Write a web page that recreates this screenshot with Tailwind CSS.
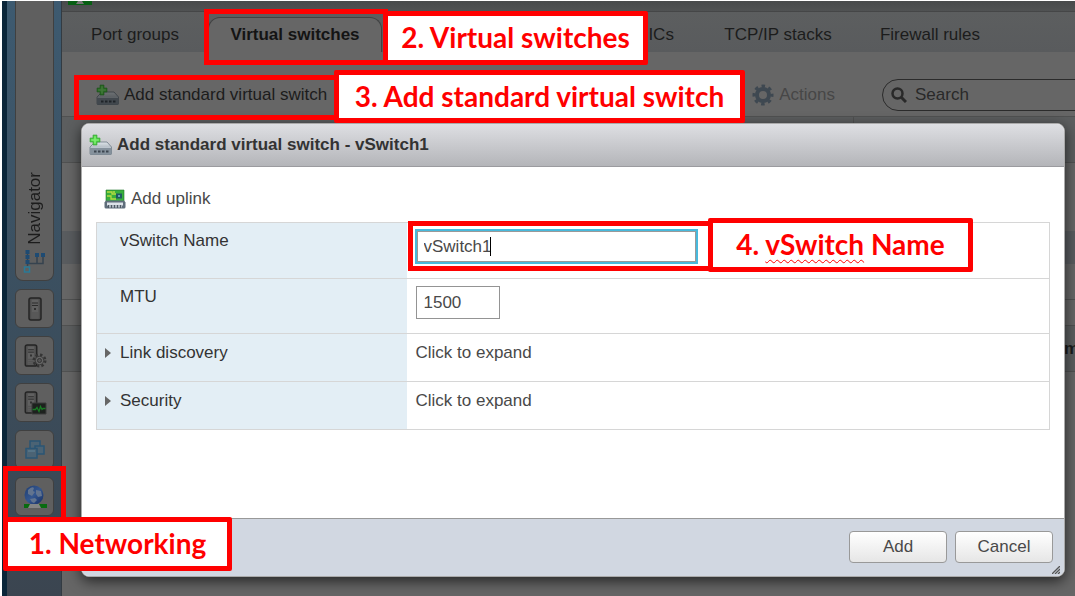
<!DOCTYPE html>
<html lang="en">
<head>
<meta charset="utf-8">
<title>Add standard virtual switch</title>
<script src="https://cdn.jsdelivr.net/npm/@tailwindcss/browser@4"></script>
</head>
<body class="bg-white">
<svg class="absolute h-0 w-0" aria-hidden="true">
  <defs>
    <linearGradient id="metal" x1="0" y1="0" x2="0" y2="1"><stop offset="0" stop-color="#dfe5ea"/><stop offset="1" stop-color="#76838f"/></linearGradient>
    <linearGradient id="globe" x1="0" y1="0" x2="1" y2="1"><stop offset="0" stop-color="#1f3d70"/><stop offset="0.5" stop-color="#34568f"/><stop offset="1" stop-color="#152e63"/></linearGradient>
    <symbol id="switch" viewBox="0 0 24 22">
      <path d="M6 8h12l4.500 5v6.500q0 1-1 1H2q-1 0-1-1V13z" fill="url(#metal)" stroke="#6d7a87" stroke-width=".8"/>
      <path d="M1 13h21.500v6.500q0 1-1 1H2q-1 0-1-1z" fill="#85919c"/>
      <path d="M1.500 13.400h20.500" stroke="#c3ccd4" stroke-width="1"/>
      <path d="M5 16.500h2.500v2H5zM9 16.500h2.500v2H9zM13 16.500h2.500v2H13zM17 16.500h2.500v2H17z" fill="#3d4650"/>
      <path d="M4 1h4v3h3v4H8v3H4V8H1V4h3z" fill="#4fcb47" stroke="#35a337" stroke-width=".6"/>
      <path d="M5.200 2.200h1.600v3h3v1.500h-3v3H5.200v-3h-3V5.200h3z" fill="#7ff071"/>
    </symbol>
    <symbol id="server" viewBox="0 0 14 24">
      <rect x="1" y="1" width="12" height="22" rx="2" fill="#4d4d4d" stroke="#242424" stroke-width="1.500"/>
      <path d="M3.500 2.500h7v19h-7z" fill="#606060"/>
      <path d="M4 6h6M4 8.500h6" stroke="#2b2b2b"/>
      <path d="M6 11h2v2H6z" fill="#303030"/>
      <path d="M4 16h6M4 18h6M4 20h6" stroke="#4a4a4a" stroke-width=".7"/>
    </symbol>
  </defs>
</svg>

<div class="relative min-h-screen overflow-hidden font-['Liberation_Sans',Arial,sans-serif] text-[17px] leading-5 text-[#494949]">

  <!-- Dimmed application behind the dialog -->
  <div class="flex min-h-screen border-t border-l-2 border-white text-[#1c1c1c]">
    <nav aria-label="Navigator" class="flex w-[60px] shrink-0 flex-col gap-2 border-r border-l-5 border-r-[#333b42] border-l-[#0b2639] bg-linear-to-b from-[#3d5a70] via-[#3b4f5f] via-50% to-[#3b4550] pr-[7px] pl-2">
      <button class="flex h-[280px] shrink-0 flex-col items-center justify-end gap-1 rounded-b-lg border border-t-0 border-[#404040] bg-[#5f5f5f] pb-[7px]">
        <span class="rotate-180 [writing-mode:vertical-rl]">Navigator</span>
        <svg class="h-6 w-6" viewBox="0 0 24 24" fill="none">
          <path d="M4.500 3v14M4.500 14.500H16M14 14.500V7M20 7v7.500h-5" stroke="#36434f" stroke-width="1.500"/>
          <path d="M2.500 1h4v4h-4zM2.500 6h4v4h-4zM2.500 11h4v4h-4zM12 4h4v4h-4zM18 4h4v4h-4z" fill="#1e4b73"/>
          <path d="M1.500 18h5v5h-5z" stroke="#2a7b98" stroke-width="1.500"/>
        </svg>
      </button>
      <button aria-label="Host" class="flex h-[39px] items-center justify-center rounded-md border border-[#404040] bg-[#5f5f5f]"><svg class="h-6 w-3.5"><use href="#server"/></svg></button>
      <button aria-label="Manage" class="flex h-[39px] items-center justify-center rounded-md border border-[#404040] bg-[#5f5f5f]">
        <svg class="h-6 w-6" viewBox="0 0 24 24"><use href="#server" x="1" width="14" height="23"/>
          <circle cx="16.500" cy="16.500" r="5.500" fill="none" stroke="#353535" stroke-width="3" stroke-dasharray="2.300 2"/>
          <circle cx="16.500" cy="16.500" r="4.200" fill="#656565" stroke="#3d3d3d"/><circle cx="16.500" cy="16.500" r="2" fill="#555" stroke="#353535"/></svg>
      </button>
      <button aria-label="Monitor" class="flex h-[39px] items-center justify-center rounded-md border border-[#404040] bg-[#5f5f5f]">
        <svg class="h-6 w-6" viewBox="0 0 24 24"><use href="#server" x="1" width="14" height="23"/>
          <path d="M9 12h14v11H9z" fill="#1d211e" stroke="#3c3c3c"/><path d="M9.500 18.500h3l1.500-2 2 4 1.500-5 1.500 3 1-1h2.500" fill="none" stroke="#187b24" stroke-width="1.300"/></svg>
      </button>
      <button aria-label="Virtual machines" class="flex h-[39px] items-center justify-center rounded-md border border-[#404040] bg-[#5f5f5f]">
        <svg class="h-5 w-6" viewBox="0 0 24 20" fill="#4b6374" stroke="#2b5574" stroke-width="1.500"><path d="M7 1h10v9H7z"/><path d="M12 6h9v8h-9z"/><path d="M3 8.500h11V18H3z"/><path d="M5 11h7" stroke="#58788c"/></svg>
      </button>
      <button aria-label="Networking" class="flex h-[39px] items-center justify-center rounded-md border border-[#404040] bg-[#5f5f5f]">
        <svg class="h-6 w-6" viewBox="0 0 24 24"><circle cx="11" cy="10" r="9.500" fill="url(#globe)"/><path d="M5 5q4-4 6-2l-1 3 2 1-3 4-4-2zM13 5l5 1 1 5-4 1-2-3zM7 14l5-1 2 2-3 3q-3-1-4-4z" fill="#62748f"/>
          <path d="M1 19h23v4H1z" fill="#086b10"/><path d="M7 19h9l2 4H5z" fill="#858585"/></svg>
      </button>
    </nav>

    <main class="flex min-w-0 grow flex-col bg-[#666]">
      <div class="h-2.5 bg-linear-to-b from-[#484a4b] to-[#505253] pl-1.5">
        <svg class="h-1 w-6" viewBox="0 0 24 4"><path d="M0 0h24v4H0z" fill="#075e13"/><path d="M10 0h4l2 3H8z" fill="#777"/></svg>
      </div>
      <div role="tablist" class="flex h-[41px] shrink-0 border-t border-[#454647] bg-linear-to-b from-[#5c5e5f] to-[#595b5d]">
        <button role="tab" class="w-[146px] pt-1.5">Port groups</button>
        <button role="tab" aria-selected="true" class="mt-[5px] w-[174px] rounded-t-xl border border-b-0 border-[#414243] bg-[#666] font-bold text-[#141414]">Virtual switches</button>
        <button role="tab" class="ml-[181px] w-[120px] pt-1.5 pr-1">Physical NICs</button>
        <button role="tab" class="ml-[30px] w-[130px] pt-1.5">TCP/IP stacks</button>
        <button role="tab" class="ml-[22px] w-[130px] pt-1.5">Firewall rules</button>
      </div>
      <div class="flex h-16 shrink-0 items-center pt-[22px] pl-[34px]">
        <button class="flex items-center gap-1">
          <svg class="h-[22px] w-6 brightness-50"><use href="#switch"/></svg>Add standard virtual switch
        </button>
        <button disabled class="ml-auto flex items-center gap-1 text-[#474747]">
          <svg class="h-6 w-6" viewBox="0 0 24 24" fill="none"><circle cx="12" cy="12" r="6" stroke="#3e4851" stroke-width="4"/><circle cx="12" cy="12" r="9" stroke="#3e4851" stroke-width="3" stroke-dasharray="3.500 3.570" stroke-dashoffset="1.750"/></svg>Actions
        </button>
        <label class="-mr-4 ml-[47px] flex h-8 w-[209px] shrink-0 items-center gap-2 rounded-full border border-[#2b2b2b] pl-2">
          <svg class="h-4 w-4 shrink-0" viewBox="0 0 16 16" fill="none" stroke="#292929"><circle cx="6.500" cy="6.500" r="5" stroke-width="2.500"/><path d="M10.500 10.500 15 15" stroke-width="3"/></svg>
          <input type="search" aria-label="Search" placeholder="Search" class="w-32 bg-transparent outline-none placeholder:text-[#292929]">
        </label>
      </div>
      <div class="flex h-[47px] shrink-0 border-y border-[#505151] bg-[#5c5e5f]"><div class="grow border-r border-[#505151]"></div><div class="w-[221px]"></div></div>
      <div class="h-[68px] shrink-0"></div>
      <div class="h-[33px] shrink-0 bg-[#595c5f]"></div>
      <div class="h-9 shrink-0 border-b border-[#505151]"></div>
      <div class="h-[26px] shrink-0 border-b border-[#505151]"></div>
      <div class="flex h-[46px] shrink-0 items-center justify-end overflow-hidden border-b border-[#505151] bg-[#5c5e5f] font-bold"><span class="-mr-1">m</span></div>
    </main>
  </div>

  <!-- Dialog -->
  <form role="dialog" aria-labelledby="dlg-title" class="absolute top-[123px] right-[10px] bottom-[19px] left-[81px] flex flex-col overflow-hidden rounded-lg border border-[#aaa] bg-white shadow-[0_4px_14px_rgba(0,0,0,0.65)]">
    <header class="flex h-[43px] shrink-0 items-center gap-1 border-b border-[#9b9b9f] bg-linear-to-b from-[#dedfe3] to-[#b4b5b9] pl-[7px]">
      <svg class="h-[22px] w-6"><use href="#switch"/></svg>
      <h1 id="dlg-title" class="font-bold text-[#333]">Add standard virtual switch - vSwitch1</h1>
    </header>
    <div class="grow px-3.5 pt-5">
      <button type="button" class="ml-2 flex h-6 items-center gap-[5px] text-[#494949]">
        <svg class="h-5 w-[22px]" viewBox="0 0 22 20"><path d="M2 1h18v12H2z" fill="#38af3d" stroke="#21762b" stroke-width=".6"/><path d="M3 3h5v2h4M3 7h4v3h5M9 3h2" stroke="#b6dc42" stroke-width="1.300" fill="none"/><path d="M12 4.500h6v5h-6z" fill="#205a62"/><path d="M14 6h2v2h-2z" fill="#65a0b8"/><path d="M2 11.500h18l1.500 2V18q0 1.500-1.500 1.500H2Q.5 19.500.5 18v-4.500z" fill="#5f6d7b"/><path d="M3 13.500h16v3H3z" fill="#dce2e8"/><path d="M4 16.500h14v2H4z" fill="#abb4bd"/><path d="M4.500 16v3M7.500 16v3M10.500 16v3M13.500 16v3M16.500 16v3" stroke="#4e5964" stroke-width="1"/></svg>Add uplink
      </button>
      <table class="mt-[11px] w-full table-fixed border-collapse border border-[#d6d6d6] text-left">
        <colgroup><col class="w-[310px]"><col></colgroup>
        <tbody>
          <tr class="h-14 border-b border-[#d6d6d6] align-top">
            <th class="bg-[#e3eef5] pt-2 pl-[23px] font-normal text-[#333]"><label for="name">vSwitch Name</label></th>
            <td class="pt-1.5 pl-2"><input id="name" value="vSwitch1" class="block h-[35px] w-[283px] border-2 border-[#48b9dc] px-[7px] outline-none inset-ring inset-ring-[#999]"></td>
          </tr>
          <tr class="h-[55px] border-b border-[#d6d6d6] align-top">
            <th class="bg-[#e3eef5] pt-2 pl-[23px] font-normal text-[#333]"><label for="mtu">MTU</label></th>
            <td class="pt-[7px] pl-[9px]"><input id="mtu" value="1500" class="block h-[33px] w-[84px] border border-[#949494] px-[7px] outline-none"></td>
          </tr>
          <tr class="h-12 border-b border-[#d6d6d6] align-top">
            <th class="bg-[#e3eef5] pt-[9px] pl-2 font-normal text-[#333]"><button type="button" class="flex items-center gap-2"><svg class="h-2.5 w-[7px]" viewBox="0 0 7 10"><path d="M0 0v10l6-5z" fill="#666"/></svg>Link discovery</button></th>
            <td class="pt-[9px] pl-[9px]">Click to expand</td>
          </tr>
          <tr class="h-12 align-top">
            <th class="bg-[#e3eef5] pt-[9px] pl-2 font-normal text-[#333]"><button type="button" class="flex items-center gap-2"><svg class="h-2.5 w-[7px]" viewBox="0 0 7 10"><path d="M0 0v10l6-5z" fill="#666"/></svg>Security</button></th>
            <td class="pt-[9px] pl-[9px]">Click to expand</td>
          </tr>
        </tbody>
      </table>
    </div>
    <footer class="relative flex h-[58px] shrink-0 items-center justify-end gap-2 border-t border-[#999] bg-[#d1d7e1] pr-[11px] pb-0.5">
      <button class="h-8 w-[98px] rounded-sm border border-[#999] bg-linear-to-b from-white to-[#e6e6e6]">Add</button>
      <button type="button" class="h-8 w-[98px] rounded-sm border border-[#999] bg-linear-to-b from-white to-[#e6e6e6]">Cancel</button>
      <svg class="absolute right-1 bottom-0.5 h-2 w-2" viewBox="0 0 8 8"><path d="M0 8 8 0M3 8l5-5M6 8l2-2" stroke="#555" stroke-width="1.300"/></svg>
    </footer>
  </form>
  <!-- Text caret in the name field -->
  <div class="absolute top-[237px] left-[490px] h-[19px] w-px bg-black"></div>

  <!-- Step annotations -->
  <div class="font-[Lato,'Open_Sans',sans-serif] text-[28px] leading-8 font-bold whitespace-nowrap text-[#f00]">
    <div class="absolute top-[466px] left-[3px] h-[56px] w-[63px] border-5 border-[#f00]"></div>
    <div class="absolute top-[517px] left-[3px] flex h-[54px] w-[229px] items-center justify-center rounded-xs border-5 border-[#f00] bg-white pb-0.5">1. Networking</div>
    <div class="absolute top-[9px] left-[204px] h-[56px] w-[184px] border-5 border-[#f00]"></div>
    <div class="absolute top-[11px] left-[383px] flex h-[54px] w-[265px] items-center justify-center rounded-xs border-5 border-[#f00] bg-white pb-0.5">2. Virtual switches</div>
    <div class="absolute top-[75px] left-[74px] h-[45px] w-[266px] border-5 border-[#f00]"></div>
    <div class="absolute top-[70px] left-[334px] flex h-[53px] w-[411px] items-center justify-center rounded-xs border-5 border-[#f00] bg-white pb-0.5">3. Add standard virtual switch</div>
    <div class="absolute top-[221px] left-[408px] h-[50px] w-[305px] border-5 border-[#f00]"></div>
    <div class="absolute top-[218px] left-[708px] flex h-[54px] w-[265px] items-center justify-center rounded-xs border-5 border-[#f00] bg-white pb-0.5"><span>4. <span class="underline decoration-wavy decoration-1 underline-offset-4">vSwitch</span> Name</span></div>
  </div>
</div>
</body>
</html>
